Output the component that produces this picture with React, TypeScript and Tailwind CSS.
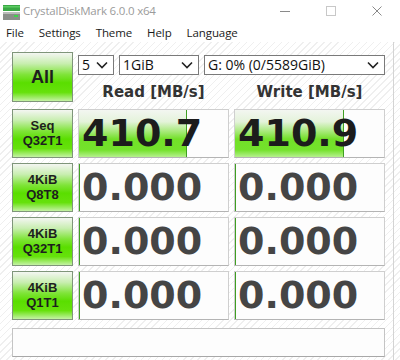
import React from 'react';

const hatch =
  'bg-[repeating-linear-gradient(135deg,#ffffff_0px,#ffffff_4px,#efefef_4px,#efefef_5px)]';

const btnClass =
  'flex flex-col items-center justify-center border border-[#7f957a] bg-[linear-gradient(to_bottom,#f4f6f2_0%,#c8eeb0_22%,#7fe438_45%,#5ade00_62%,#66e10c_82%,#c4f2a4_100%)] text-[#1e1e1e] font-bold leading-[15px] font-["Liberation_Sans",Arial,sans-serif]';

const rows = [
  { top: 'Seq', bottom: 'Q32T1', read: '410.7', write: '410.9', readBar: 'w-[108px]', writeBar: 'w-[109px]' },
  { top: '4KiB', bottom: 'Q8T8', read: '0.000', write: '0.000', readBar: 'w-0', writeBar: 'w-0' },
  { top: '4KiB', bottom: 'Q32T1', read: '0.000', write: '0.000', readBar: 'w-0', writeBar: 'w-0' },
  { top: '4KiB', bottom: 'Q1T1', read: '0.000', write: '0.000', readBar: 'w-0', writeBar: 'w-0' },
];

const Chevron = () => (
  <svg width="12" height="8" viewBox="0 0 12 8" className="shrink-0">
    <path d="M1 1.5 L6 6.5 L11 1.5" fill="none" stroke="#222" strokeWidth="1.6" />
  </svg>
);

const Select: React.FC<{ label: string; className: string }> = ({ label, className }) => (
  <div
    className={`h-[20px] flex items-center justify-between bg-white border border-[#7a7a7a] pl-[3px] pr-[5px] text-[14px] text-[#111] font-["Open_Sans","Liberation_Sans",sans-serif] ${className}`}
  >
    <span className="leading-none">{label}</span>
    <Chevron />
  </div>
);

const ValueBox: React.FC<{ value: string; bar: string; dark: boolean }> = ({ value, bar, dark }) => (
  <div className="relative h-[49px] bg-[#fdfdfd] border border-[#cfcfcf] border-b-[#b4b4b4] overflow-hidden">
    <div
      className={`absolute left-0 top-0 bottom-0 ${bar} bg-[linear-gradient(to_bottom,#f3f6f1_0%,#e4f3da_25%,#a9ea7c_45%,#72e028_62%,#74e22c_85%,#b6f08e_100%)] border-r border-[#3f9f22]`}
    />
    <div
      className={`relative h-full flex items-center pl-[3px] text-[38px] font-bold leading-none font-["DejaVu_Sans",Verdana,sans-serif] ${dark ? 'text-[#1c1c1c]' : 'text-[#454545]'}`}
    >
      {value}
    </div>
  </div>
);

export default function App() {
  return (
    <div className="w-[400px] h-[360px] flex flex-col bg-white overflow-hidden font-['Open_Sans','Liberation_Sans',sans-serif]">
      {/* title bar */}
      <div className="h-[22px] flex items-center">
        <svg width="20" height="17" viewBox="0 0 20 17" className="ml-[2px] mt-[2px]">
          <rect x="1" y="1" width="17" height="6" fill="#3aa845" />
          <rect x="1" y="2" width="17" height="1.5" fill="#5ccb63" />
          <rect x="1" y="8" width="17" height="8" fill="#8a8f8a" />
          <rect x="1" y="8" width="17" height="2" fill="#b9bcb9" />
          <rect x="12" y="11" width="4" height="2" fill="#3ed34a" />
        </svg>
        <span className="ml-[1px] text-[11.5px] text-[#9b9b9b] tracking-[-0.2px]">CrystalDiskMark 6.0.0 x64</span>
        <div className="ml-auto flex items-center h-full">
          <div className="w-[46px] flex justify-center">
            <div className="w-[10px] h-px bg-[#8a8a8a]" />
          </div>
          <div className="w-[46px] flex justify-center">
            <div className="w-[10px] h-[10px] border border-[#c8c8c8]" />
          </div>
          <div className="w-[46px] flex justify-center">
            <svg width="10" height="10" viewBox="0 0 10 10">
              <path d="M0.5 0.5 L9.5 9.5 M9.5 0.5 L0.5 9.5" stroke="#8a8a8a" strokeWidth="1" />
            </svg>
          </div>
        </div>
      </div>

      {/* menu */}
      <div className="h-[20px] flex items-center gap-[15px] pl-[6px] pt-[2px] text-[11.5px] text-[#1a1a1a] tracking-[-0.1px]">
        <span>File</span>
        <span>Settings</span>
        <span>Theme</span>
        <span>Help</span>
        <span>Language</span>
      </div>

      {/* main */}
      <div className={`flex-1 flex ${hatch}`}>
        <div className="flex-1 pl-[12px] pt-[10px]">
          <div className="grid grid-cols-[61px_151px_151px] gap-[5px]">
            <div className={`${btnClass} h-[50px] text-[18px]`}>All</div>
            <div className="col-span-2 flex flex-col">
              <div className="flex gap-[5px] mt-[3px]">
                <Select label="5" className="w-[36px]" />
                <Select label="1GiB" className="w-[80px]" />
                <Select label="G: 0% (0/5589GiB)" className="w-[181px]" />
              </div>
              <div className="flex mt-[6px] text-[15px] font-bold text-[#333] font-['DejaVu_Sans',Verdana,sans-serif]">
                <div className="w-[151px] text-center">Read [MB/s]</div>
                <div className="w-[5px]" />
                <div className="w-[151px] text-center">Write [MB/s]</div>
              </div>
            </div>

            {rows.map((r, i) => (
              <React.Fragment key={i}>
                <div className={`${btnClass} h-[49px] text-[13px]`}>
                  <span>{r.top}</span>
                  <span>{r.bottom}</span>
                </div>
                <ValueBox value={r.read} bar={r.readBar} dark={i === 0} />
                <ValueBox value={r.write} bar={r.writeBar} dark={i === 0} />
              </React.Fragment>
            ))}
          </div>
          <div className="mt-[8px] w-[373px] h-[29px] bg-[#fdfdfd] border border-[#c4c4c4] border-b-[#a8a8a8]" />
        </div>
        <div className="w-px bg-[#d4d4d4] mr-[6px]" />
      </div>
    </div>
  );
}
